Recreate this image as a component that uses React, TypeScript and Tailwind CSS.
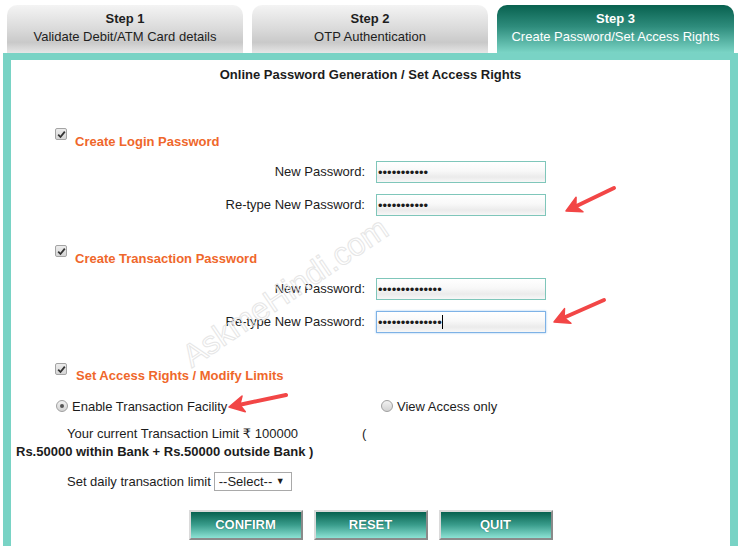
import React from 'react';

const ORANGE = 'text-[#ef672b]';

function CheckBox() {
  return (
    <span className="flex h-[12px] w-[12px] shrink-0 items-center justify-center rounded-[2px] border border-[#a4a4a4] bg-[linear-gradient(to_bottom,#ececec,#d6d6d6)]">
      <svg width="9" height="9" viewBox="0 0 9 9">
        <path d="M1.2 4.6 L3.5 7 L7.8 1.6" fill="none" stroke="#333" strokeWidth="1.8" />
      </svg>
    </span>
  );
}

function Radio({ checked }: { checked?: boolean }) {
  return (
    <span className="flex h-[12px] w-[12px] shrink-0 items-center justify-center rounded-full border border-[#a0a0a0] bg-[linear-gradient(to_bottom,#f2f2f2,#d2d2d2)]">
      {checked && <span className="h-[4px] w-[4px] rounded-full bg-[#555]" />}
    </span>
  );
}

function Heading({ text, gap = 'ml-[8px]', top = 'mt-[6px]' }: { text: string; gap?: string; top?: string }) {
  return (
    <div className="flex items-start pl-[44px]">
      <CheckBox />
      <span className={`${gap} ${top} font-bold leading-[16px] ${ORANGE}`}>{text}</span>
    </div>
  );
}

function PwRow({ label, value, focused, className = '' }: { label: string; value: string; focused?: boolean; className?: string }) {
  return (
    <div className={`flex ${className}`}>
      <div className="w-[354px] text-right leading-[22px]">{label}</div>
      <div className="relative ml-[11px]">
        <input
          type="password"
          readOnly
          value={value}
          className={`block h-[22px] w-[170px] pl-[1px] text-[13px] outline-none bg-[linear-gradient(to_bottom,#ffffff,#f8f8f8_45%,#ebebeb_75%,#f7f7f7)] ${
            focused ? 'border border-[#7eb2e6] shadow-[0_0_2px_#9cc6f0]' : 'border border-[#7fc6ba]'
          }`}
        />
        {focused && <span className="absolute left-[66px] top-[4px] h-[14px] w-px bg-black" />}
      </div>
    </div>
  );
}

function Arrow({ x1, y1, x2, y2 }: { x1: number; y1: number; x2: number; y2: number }) {
  const len = Math.hypot(x2 - x1, y2 - y1);
  const ux = (x2 - x1) / len;
  const uy = (y2 - y1) / len;
  const bx = x2 - ux * 15;
  const by = y2 - uy * 15;
  const nx = -uy * 8;
  const ny = ux * 8;
  const pts = [
    [x2, y2],
    [bx + nx, by + ny],
    [x2 - ux * 11, y2 - uy * 11],
    [bx - nx, by - ny],
  ]
    .map((p) => p.join(','))
    .join(' ');
  return (
    <g>
      <line x1={x1} y1={y1} x2={x2 - ux * 10} y2={y2 - uy * 10} stroke="#f24646" strokeWidth="4" strokeLinecap="round" />
      <polygon points={pts} fill="#f24646" stroke="#f24646" strokeWidth="1.5" strokeLinejoin="round" />
    </g>
  );
}

function Tab({ step, title, active }: { step: string; title: string; active?: boolean }) {
  return (
    <div
      className={`h-[48px] rounded-t-[10px] pt-[5px] text-center leading-[18px] ${
        active
          ? 'w-[237px] bg-[linear-gradient(to_bottom,#08614f,#2e8c7c_45%,#7bd5c6)] text-white'
          : 'w-[236px] bg-[linear-gradient(to_bottom,#f4f4f4,#dadada_50%,#c9c9c9_78%,#e6e6e6)] text-[#1e1e1e]'
      }`}
    >
      <div className="font-bold">{step}</div>
      <div>{title}</div>
    </div>
  );
}

export default function App() {
  return (
    <div className="relative h-[546px] w-[740px] overflow-hidden bg-white font-['Liberation_Sans','DejaVu_Sans',sans-serif] text-[13px] text-[#1c1c1c]">
      <div className="flex gap-[9px] pl-[7px] pt-[5px]">
        <Tab step="Step 1" title="Validate Debit/ATM Card details" />
        <Tab step="Step 2" title="OTP Authentication" />
        <Tab step="Step 3" title="Create Password/Set Access Rights" active />
      </div>

      <div className="ml-[3px] h-[500px] w-[735px] border-x-[8px] border-t-[7px] border-[#79d3c5] bg-white">
        <div className="pt-[7px] text-center font-bold leading-[16px]">Online Password Generation / Set Access Rights</div>

        <div className="mt-[45px]">
          <Heading text="Create Login Password" />
        </div>
        <PwRow className="mt-[11px]" label="New Password:" value="12345678901" />
        <PwRow className="mt-[11px]" label="Re-type New Password:" value="12345678901" />

        <div className="mt-[29px]">
          <Heading text="Create Transaction Password" />
        </div>
        <PwRow className="mt-[11px]" label="New Password:" value="12345678901234" />
        <PwRow className="mt-[11px]" label="Re-type New Password:" value="12345678901234" focused />

        <div className="mt-[30px]">
          <Heading text="Set Access Rights / Modify Limits" gap="ml-[9px]" top="mt-[5px]" />
        </div>

        <div className="mt-[15px] flex items-start pl-[45px] leading-[16px]">
          <div className="flex w-[325px] items-start">
            <span className="mt-[1px]">
              <Radio checked />
            </span>
            <span className="ml-[4px]">Enable Transaction Facility</span>
          </div>
          <span className="mt-[1px]">
            <Radio />
          </span>
          <span className="ml-[4px]">View Access only</span>
        </div>

        <div className="mt-[11px] flex pl-[56px] leading-[16px]">
          <span className="w-[295px]">Your current Transaction Limit ₹ 100000</span>
          <span>(</span>
        </div>
        <div className="mt-[2px] pl-[5px] font-bold leading-[16px]">Rs.50000 within Bank + Rs.50000 outside Bank )</div>

        <div className="mt-[12px] flex items-center pl-[56px]">
          <span className="leading-[16px]">Set daily transaction limit</span>
          <div className="ml-[3px] flex h-[19px] w-[78px] items-center justify-between border border-[#a9a9a9] bg-white pl-[4px] pr-[6px]">
            <span>--Select--</span>
            <span className="text-[9px]">▼</span>
          </div>
        </div>

        <div className="mt-[19px] flex justify-center gap-[11px]">
          {['CONFIRM', 'RESET', 'QUIT'].map((b) => (
            <button
              key={b}
              className="h-[30px] w-[114px] border-2 border-b-[#8a8a8a] border-l-[#dadada] border-r-[#8a8a8a] border-t-[#dadada] bg-[linear-gradient(to_bottom,#07614f,#3a9d8c_50%,#8ce2d4)] text-[13px] font-bold text-white [text-shadow:0_0_1px_#0a5548]"
            >
              {b}
            </button>
          ))}
        </div>
      </div>

      <div className="pointer-events-none absolute left-[285px] top-[292px] -translate-x-1/2 -translate-y-1/2 rotate-[-34deg] whitespace-nowrap text-[32px] text-transparent [-webkit-text-stroke:1px_#e6e6e6]">
        AskmeHindi.com
      </div>

      <svg className="pointer-events-none absolute left-0 top-0" width="740" height="546">
        <Arrow x1={614} y1={188} x2={566} y2={211} />
        <Arrow x1={604} y1={300} x2={554} y2={322} />
        <Arrow x1={286} y1={395} x2={229} y2={407} />
      </svg>
    </div>
  );
}
